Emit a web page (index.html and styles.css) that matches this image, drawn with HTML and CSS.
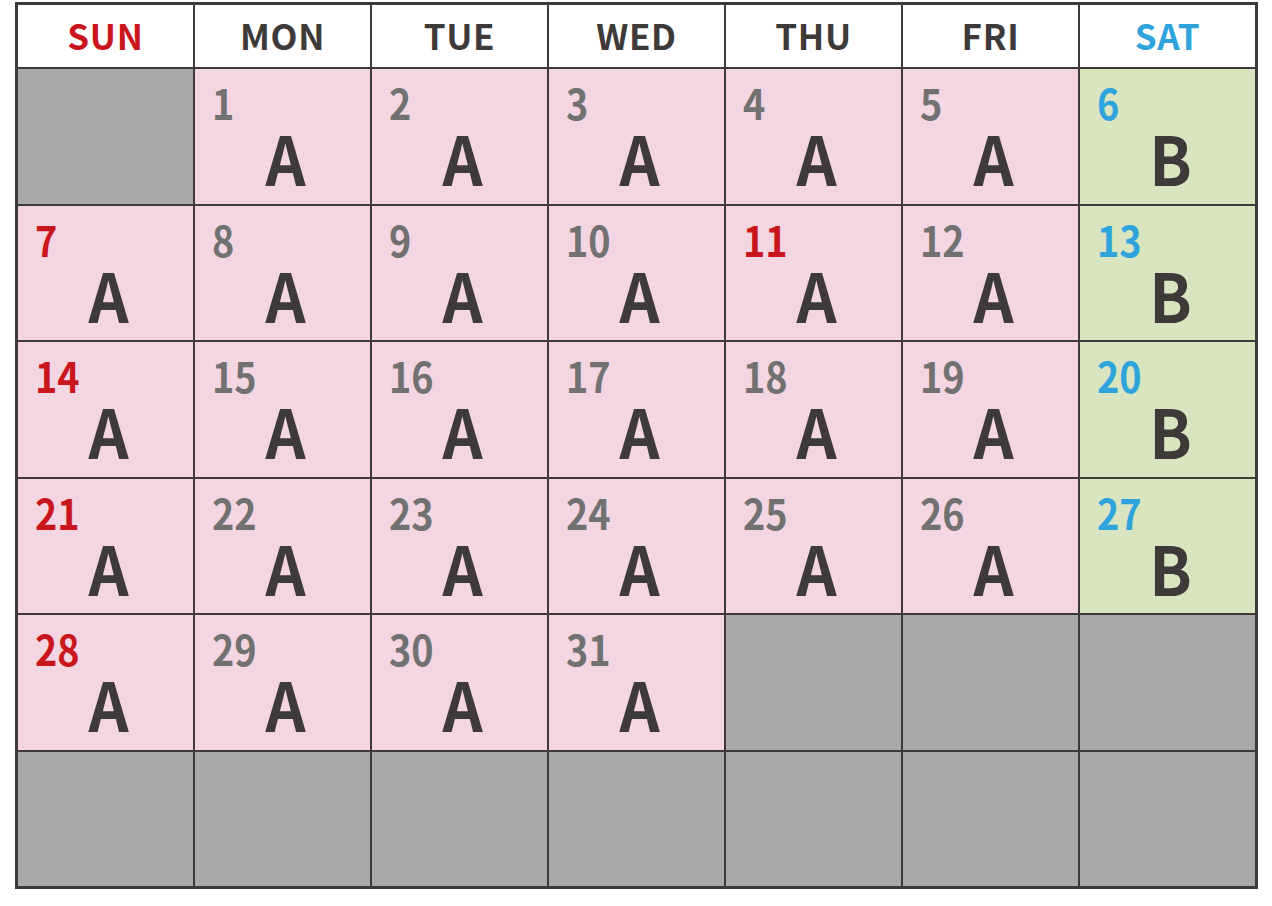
FILE: index.html
```html
<!DOCTYPE html>
<html lang="ja">
<head>
<meta charset="utf-8">
<title>Calendar</title>
<link rel="stylesheet" href="styles.css">
</head>
<body>
<div class="calendar">
  <div class="head sun">SUN</div>
  <div class="head">MON</div>
  <div class="head">TUE</div>
  <div class="head">WED</div>
  <div class="head">THU</div>
  <div class="head">FRI</div>
  <div class="head sat">SAT</div>

  <div class="cell off"></div>
  <div class="cell a"><span class="num">1</span><span class="mark">A</span></div>
  <div class="cell a"><span class="num">2</span><span class="mark">A</span></div>
  <div class="cell a"><span class="num">3</span><span class="mark">A</span></div>
  <div class="cell a"><span class="num">4</span><span class="mark">A</span></div>
  <div class="cell a"><span class="num">5</span><span class="mark">A</span></div>
  <div class="cell b"><span class="num blue">6</span><span class="mark">B</span></div>

  <div class="cell a"><span class="num red">7</span><span class="mark">A</span></div>
  <div class="cell a"><span class="num">8</span><span class="mark">A</span></div>
  <div class="cell a"><span class="num">9</span><span class="mark">A</span></div>
  <div class="cell a"><span class="num">10</span><span class="mark">A</span></div>
  <div class="cell a"><span class="num red">11</span><span class="mark">A</span></div>
  <div class="cell a"><span class="num">12</span><span class="mark">A</span></div>
  <div class="cell b"><span class="num blue">13</span><span class="mark">B</span></div>

  <div class="cell a"><span class="num red">14</span><span class="mark">A</span></div>
  <div class="cell a"><span class="num">15</span><span class="mark">A</span></div>
  <div class="cell a"><span class="num">16</span><span class="mark">A</span></div>
  <div class="cell a"><span class="num">17</span><span class="mark">A</span></div>
  <div class="cell a"><span class="num">18</span><span class="mark">A</span></div>
  <div class="cell a"><span class="num">19</span><span class="mark">A</span></div>
  <div class="cell b"><span class="num blue">20</span><span class="mark">B</span></div>

  <div class="cell a"><span class="num red">21</span><span class="mark">A</span></div>
  <div class="cell a"><span class="num">22</span><span class="mark">A</span></div>
  <div class="cell a"><span class="num">23</span><span class="mark">A</span></div>
  <div class="cell a"><span class="num">24</span><span class="mark">A</span></div>
  <div class="cell a"><span class="num">25</span><span class="mark">A</span></div>
  <div class="cell a"><span class="num">26</span><span class="mark">A</span></div>
  <div class="cell b"><span class="num blue">27</span><span class="mark">B</span></div>

  <div class="cell a"><span class="num red">28</span><span class="mark">A</span></div>
  <div class="cell a"><span class="num">29</span><span class="mark">A</span></div>
  <div class="cell a"><span class="num">30</span><span class="mark">A</span></div>
  <div class="cell a"><span class="num">31</span><span class="mark">A</span></div>
  <div class="cell off"></div>
  <div class="cell off"></div>
  <div class="cell off"></div>

  <div class="cell off"></div>
  <div class="cell off"></div>
  <div class="cell off"></div>
  <div class="cell off"></div>
  <div class="cell off"></div>
  <div class="cell off"></div>
  <div class="cell off"></div>
</div>
</body>
</html>
```

FILE: styles.css
```css
html, body {
  margin: 0;
  padding: 0;
  background: #ffffff;
}

body {
  padding: 2px 14px 0 15px;
  font-family: "Noto Sans CJK JP", "Noto Sans", sans-serif;
}

.calendar {
  width: 1243px;
  height: 887px;
  box-sizing: border-box;
  padding: 3px;
  background: #3e3a39;
  display: grid;
  grid-template-columns: repeat(7, 1fr);
  grid-template-rows: 62px repeat(6, 1fr);
  gap: 2px;
}

.head {
  background: #ffffff;
  display: flex;
  align-items: center;
  justify-content: center;
  padding-bottom: 3px;
  font-size: 35px;
  font-weight: 700;
  letter-spacing: 0.02em;
  color: #3e3a39;
  line-height: 1;
}

.head.sun { color: #c9161d; }
.head.sat { color: #2ea3dc; }

.cell {
  display: flex;
  flex-direction: column;
  justify-content: space-between;
  align-items: flex-start;
  padding: 12px 0 17px 17px;
  box-sizing: border-box;
  min-height: 0;
}

.cell.a { background: #f3d6e2; }
.cell.b { background: #d8e5c0; }
.cell.off { background: #a9a9a9; }

.num {
  display: inline-block;
  font-size: 42px;
  font-weight: 700;
  line-height: 1;
  color: #727171;
  transform: scaleX(0.9);
  transform-origin: left center;
}

.num.red { color: #c9161d; }
.num.blue { color: #2ea3dc; }

.mark {
  align-self: stretch;
  font-size: 68px;
  font-weight: 700;
  line-height: 1;
  color: #3e3a39;
  text-align: center;
  padding-right: 12px;
  transform: scaleX(0.92);
}
```
